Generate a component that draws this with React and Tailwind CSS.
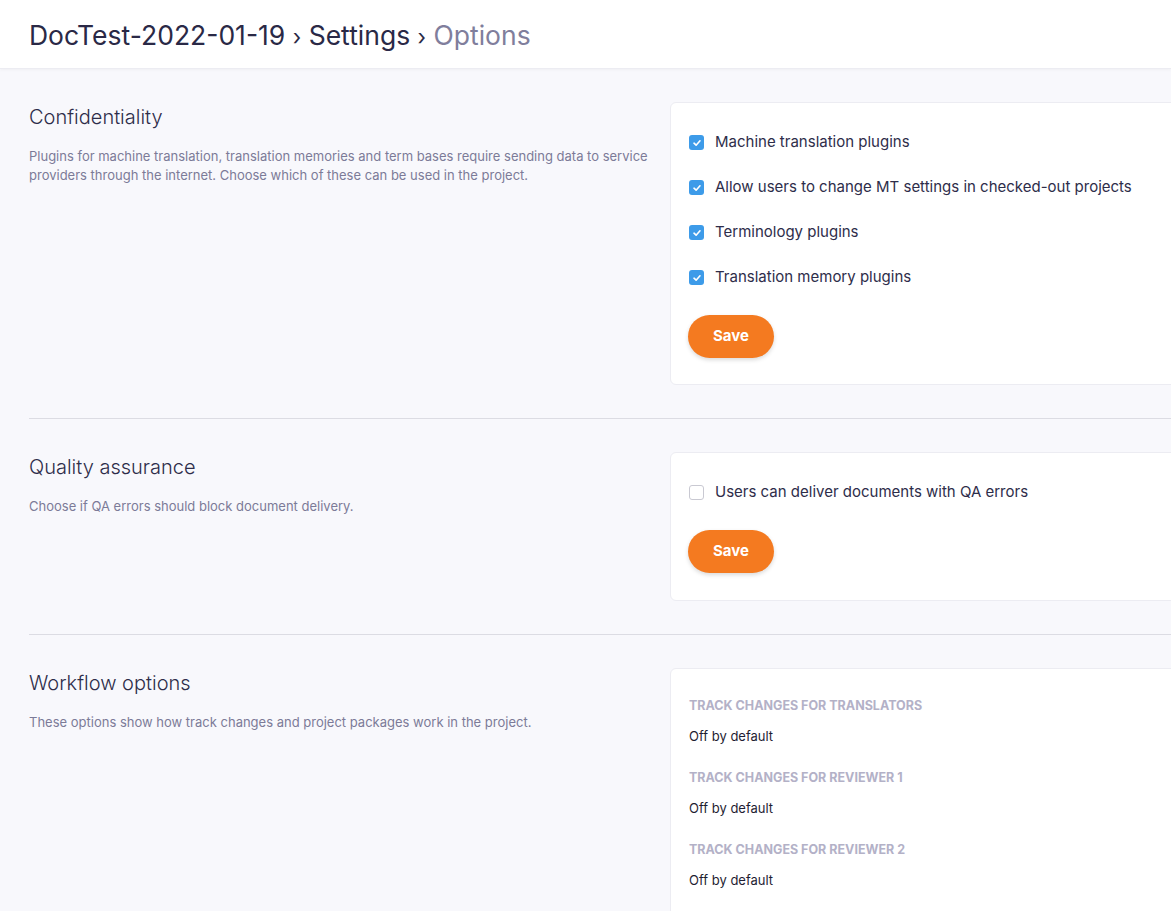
import React from "react";

function Check({ checked }) {
  return checked ? (
    <span className="flex h-[15px] w-[15px] shrink-0 items-center justify-center rounded-[3px] bg-[#3d9be9]">
      <svg width="10" height="10" viewBox="0 0 10 10" fill="none">
        <path d="M2 5.2 L4.1 7.2 L8 2.8" stroke="white" strokeWidth="1.6" strokeLinecap="round" strokeLinejoin="round" />
      </svg>
    </span>
  ) : (
    <span className="h-[15px] w-[15px] shrink-0 rounded-[3px] border border-[#c9c9d2] bg-white" />
  );
}

function Row({ checked, label }) {
  return (
    <label className="flex h-[45px] items-center gap-[11px] text-[15px] text-[#2e2d4a]">
      <Check checked={checked} />
      <span>{label}</span>
    </label>
  );
}

function SaveButton() {
  return (
    <button className="-ml-px h-[43px] w-[86px] rounded-full bg-[#f47a20] text-[15px] font-bold text-white shadow-[0_2px_4px_rgba(0,0,0,0.15)]">
      Save
    </button>
  );
}

function Section({ title, text, children, last }) {
  return (
    <div className={`flex gap-[10px] py-[33px] ${last ? "" : "border-b border-[#dcdce3]"}`}>
      <div className="w-[631px] shrink-0">
        <h2 className="text-[20px] font-light text-[#2e2d4a]">{title}</h2>
        <p className="mt-[15px] text-[13px] leading-[19px] text-[#7c7b98]">{text}</p>
      </div>
      <div className="flex-1 rounded-[6px] border border-[#ececf2] bg-white px-[18px]">{children}</div>
    </div>
  );
}

export default function App() {
  return (
    <div className="min-h-screen w-full overflow-hidden bg-[#f8f8fc]" style={{ fontFamily: "Inter, 'Noto Sans', sans-serif" }}>
      <header className="flex h-[69px] items-center border-b border-[#ececf2] bg-white px-[29px] pt-[3px] shadow-[0_1px_3px_rgba(0,0,0,0.04)]">
        <h1 className="text-[26.5px] font-normal text-[#2a2946]">
          DocTest-2022-01-19 <span className="text-[22px]">›</span> Settings <span className="text-[22px]">›</span>{" "}
          <span className="text-[#807e9c]">Options</span>
        </h1>
      </header>
      <main className="w-[1240px] pl-[29px]">
        <Section
          title="Confidentiality"
          text="Plugins for machine translation, translation memories and term bases require sending data to service providers through the internet. Choose which of these can be used in the project."
        >
          <div className="pt-[17px]">
            <Row checked label="Machine translation plugins" />
            <Row checked label="Allow users to change MT settings in checked-out projects" />
            <Row checked label="Terminology plugins" />
            <Row checked label="Translation memory plugins" />
          </div>
          <div className="pb-[26px] pt-[15px]">
            <SaveButton />
          </div>
        </Section>
        <Section title="Quality assurance" text="Choose if QA errors should block document delivery.">
          <div className="pt-[17px]">
            <Row label="Users can deliver documents with QA errors" />
          </div>
          <div className="pb-[27px] pt-[15px]">
            <SaveButton />
          </div>
        </Section>
        <Section last title="Workflow options" text="These options show how track changes and project packages work in the project.">
          <div className="pt-[28px] pb-[30px]">
            {["TRACK CHANGES FOR TRANSLATORS", "TRACK CHANGES FOR REVIEWER 1", "TRACK CHANGES FOR REVIEWER 2"].map((t) => (
              <div key={t} className="h-[72px]">
                <div className="text-[12.5px] font-bold text-[#b3b1c7]">{t}</div>
                <div className="mt-[11px] text-[13px] text-[#1f1e33]">Off by default</div>
              </div>
            ))}
          </div>
        </Section>
      </main>
    </div>
  );
}
